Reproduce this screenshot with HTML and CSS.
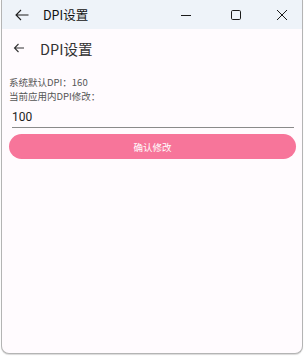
FILE: index.html
```html
<!DOCTYPE html>
<html lang="zh">
<head>
<meta charset="utf-8">
<link rel="stylesheet" href="styles.css">
</head>
<body>
<div class="window">
  <div class="titlebar">
    <svg class="tb-back" width="16" height="16" viewBox="0 0 16 16"><path d="M14.5 8H2M7 3L2 8l5 5" fill="none" stroke="#1f1f1f" stroke-width="1.1"/></svg>
    <span class="tb-title">DPI设置</span>
    <div class="tb-controls">
      <svg width="12" height="12" viewBox="0 0 12 12"><path d="M1 6.5h10" stroke="#1a1a1a" stroke-width="1"/></svg>
      <svg width="12" height="12" viewBox="0 0 12 12"><rect x="1.5" y="1.5" width="9" height="9" rx="1.2" fill="none" stroke="#1a1a1a" stroke-width="1"/></svg>
      <svg width="12" height="12" viewBox="0 0 12 12"><path d="M1 1l10 10M11 1L1 11" stroke="#1a1a1a" stroke-width="1"/></svg>
    </div>
  </div>
  <div class="content">
    <div class="appbar">
      <svg class="ab-back" width="12" height="12" viewBox="0 0 12 12"><path d="M11 6H1.5M5.5 2L1.5 6l4 4" fill="none" stroke="#333" stroke-width="1.1"/></svg>
      <span class="ab-title">DPI设置</span>
    </div>
    <div class="body">
      <div class="line">系统默认DPI：160</div>
      <div class="line">当前应用内DPI修改：</div>
      <div class="field">100</div>
      <div class="btn">确认修改</div>
    </div>
  </div>
</div>
</body>
</html>
```
FILE: styles.css
```css
html, body { margin: 0; padding: 0; background: #ffffff; }
body { width: 304px; height: 356px; overflow: hidden; font-family: "Noto Sans CJK SC", Roboto, sans-serif; }
.window {
  margin-left: 1px;
  width: 300px;
  height: 353px;
  border: 1px solid #b4b4b4;
  border-top: none;
  border-radius: 0 0 8px 8px;
  background: #fffbfe;
  overflow: hidden;
  box-shadow: 0 1px 1px rgba(0,0,0,0.15);
  display: flex;
  flex-direction: column;
}
.titlebar {
  height: 29px;
  background: #eef3f9;
  display: flex;
  align-items: center;
  flex-shrink: 0;
}
.tb-back { margin-left: 12px; }
.tb-title { margin-left: 13px; font-size: 12.5px; color: #111; font-family: "Noto Sans CJK SC", sans-serif; }
.tb-controls { margin-left: auto; display: flex; align-items: center; gap: 34px; margin-right: 14px; padding-top: 0; }
.tb-controls svg:nth-child(1) { margin-right: 4px; }
.content { flex: 1; display: flex; flex-direction: column; }
.appbar { height: 38px; display: flex; align-items: center; padding-left: 11px; }
.ab-title { margin-left: 15px; font-size: 14.5px; color: #333; }
.body { padding: 8px 6px 0 7px; display: flex; flex-direction: column; }
.line { font-size: 9.5px; line-height: 14px; color: #555; }
.field {
  margin: 6px 2px 0 3px;
  font-size: 12px;
  color: #222;
  line-height: 16px;
  padding-bottom: 2px;
  border-bottom: 1px solid #8a8a8a;
  font-family: Roboto, sans-serif;
}
.btn {
  margin-top: 6px;
  height: 25px;
  border-radius: 13px;
  background: #f7759a;
  color: #fff;
  font-size: 9.5px;
  display: flex;
  align-items: center;
  justify-content: center;
}
```
